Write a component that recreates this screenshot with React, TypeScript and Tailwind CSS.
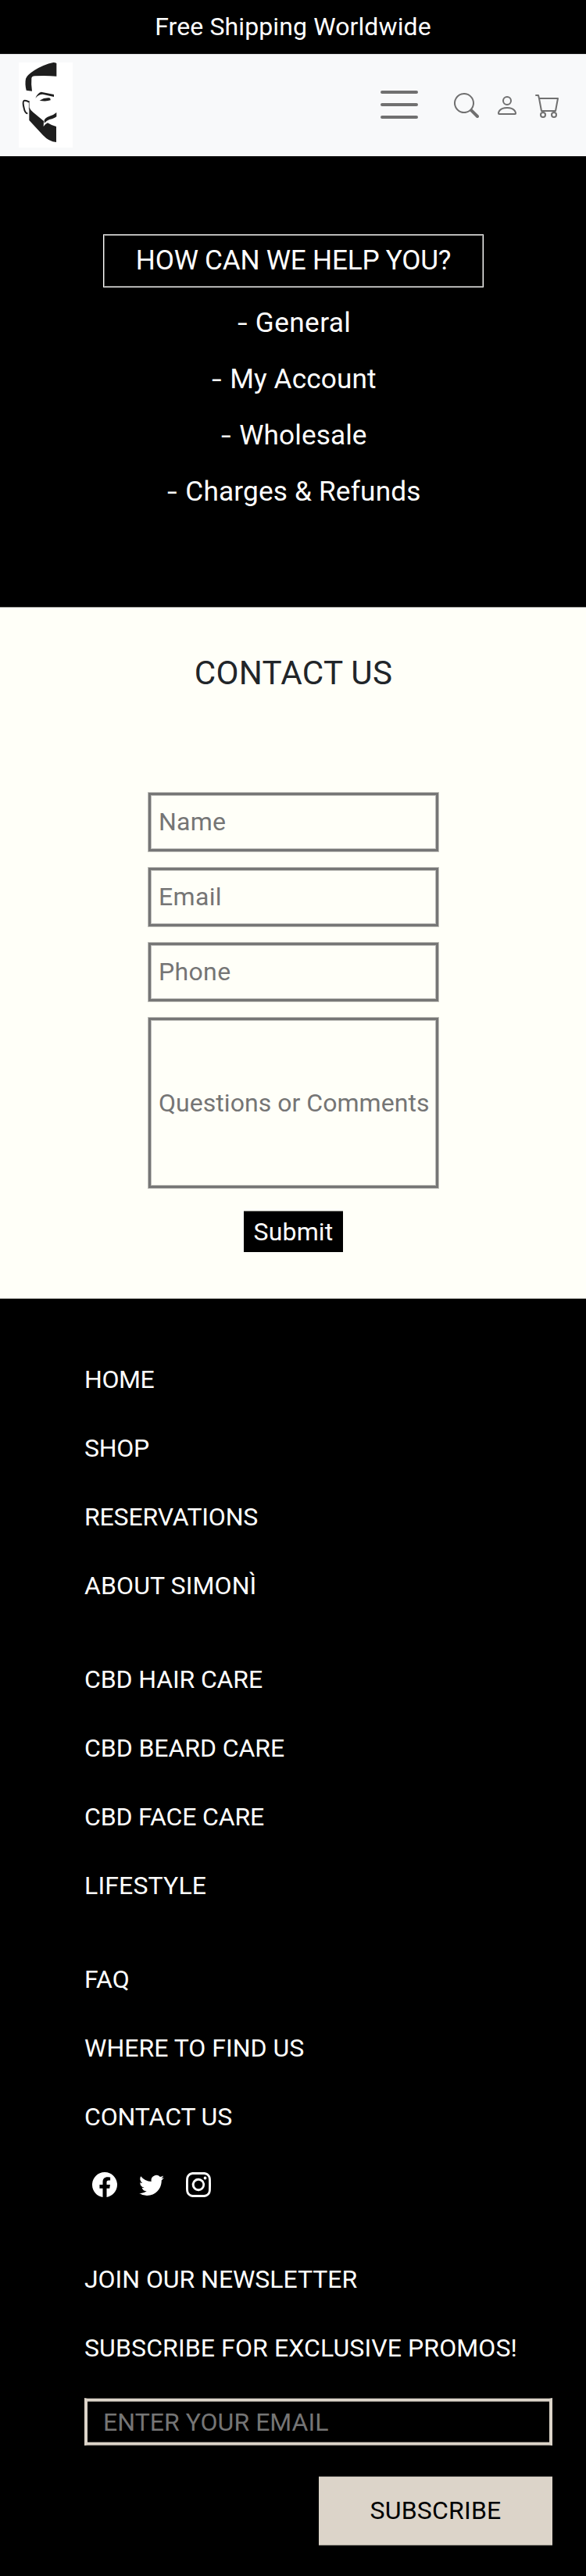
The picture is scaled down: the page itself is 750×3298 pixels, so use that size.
import { BsSearch, BsPerson, BsCart, BsFacebook, BsTwitter, BsInstagram } from "react-icons/bs";

type Label = { text: string; tracking: string };

const helpTopics: Label[] = [
  { text: "General", tracking: "tracking-[0.4px]" },
  { text: "My Account", tracking: "tracking-[0.13px]" },
  { text: "Wholesale", tracking: "tracking-[0.1px]" },
  { text: "Charges & Refunds", tracking: "tracking-[0.17px]" },
];

const linkGroups: Label[][] = [
  [
    { text: "HOME", tracking: "tracking-[-0.4px]" },
    { text: "SHOP", tracking: "tracking-[-0.3px]" },
    { text: "RESERVATIONS", tracking: "tracking-[-0.17px]" },
    { text: "ABOUT SIMONÌ", tracking: "tracking-[0.1px]" },
  ],
  [
    { text: "CBD HAIR CARE", tracking: "tracking-[-0.13px]" },
    { text: "CBD BEARD CARE", tracking: "tracking-[-0.06px]" },
    { text: "CBD FACE CARE", tracking: "tracking-[-0.15px]" },
    { text: "LIFESTYLE", tracking: "tracking-[0.15px]" },
  ],
  [
    { text: "FAQ", tracking: "tracking-normal" },
    { text: "WHERE TO FIND US", tracking: "tracking-normal" },
    { text: "CONTACT US", tracking: "tracking-[-0.13px]" },
  ],
];

function Logo() {
  return (
    <svg viewBox="0 0 207 327" className="mt-px h-[109px] w-[69px] bg-white" fill="#1e1e1e">
      <path d="M145 3Q140 0 133 0Q95 8 60 30Q32 48 27 62Q23 82 29 107L51 110Q47 85 49 60Q50 53 62 52Q100 49 145 53Z" />
      <path d="M64 137Q72 117 86 113L135 123V132Q110 126 92 122Q76 122 64 137Z" />
      <path d="M80 146Q98 134 118 136Q123 139 122 145Q104 151 80 146Z" />
      <path d="M40 152Q28 145 20 147Q14 151 20 175Q24 195 34 196" fill="none" stroke="#1e1e1e" strokeWidth="6" />
      <path d="M40 148V180" fill="none" stroke="#1e1e1e" strokeWidth="2" />
      <path d="M40 172Q45 184 56 192L96 225L95 246Q102 236 111 232Q126 242 144 246V306Q116 304 92 278L40 222Z" />
      <path d="M145 192Q134 202 118 206Q98 214 98 223V233Q108 222 118 219Q138 215 145 208Z" />
    </svg>
  );
}

function Header() {
  return (
    <header>
      <div className="h-[69px] bg-black pt-[10px] text-center tracking-[0.11px] text-white">
        Free Shipping Worldwide
      </div>
      <div className="flex h-[131px] items-center justify-between border-t border-[#dfe0e1] bg-[#f8f9fa] pr-[33px] pb-0.5 pl-6">
        <Logo />
        <div className="flex items-center text-[#707070]">
          <svg viewBox="0 0 30 30" className="mr-10 h-[60px] w-[60px]" stroke="currentColor" strokeWidth="2" strokeLinecap="round">
            <path d="M4 7h22M4 15h22M4 23h22" />
          </svg>
          <div className="flex items-center gap-5 pt-0.5">
            <BsSearch size={32} />
            <BsPerson size={32} />
            <BsCart size={32} />
          </div>
        </div>
      </div>
    </header>
  );
}

function Help() {
  return (
    <section className="flex h-[577px] flex-col items-center bg-black pt-[100px] pl-px text-[35.2px] text-white">
      <h2 className="h-[68px] w-[487px] border border-white text-center leading-[64px] tracking-[-0.24px] shadow-[inset_0_0_0_1px_#6b6b68]">
        HOW CAN WE HELP YOU?
      </h2>
      <ul className="pt-[9px] pl-0.5 text-center leading-[72px]">
        {helpTopics.map(({ text, tracking }) => (
          <li key={text} className={tracking}>
            <span className="inline-block w-[14px] origin-left scale-x-[1.3] text-left tracking-normal">-</span> {text}
          </li>
        ))}
      </ul>
    </section>
  );
}

const fieldClass =
  "w-[373px] border border-[#bfbfba] pr-3 pb-px pl-[13px] placeholder-[#757575] placeholder:opacity-100 shadow-[inset_0_0_0_3px_#767676,inset_0_0_0_4px_#bfbfba] outline-none";

function Contact() {
  return (
    <section className="flex h-[886px] flex-col items-center border-t border-b border-t-[#9f9f9a] border-b-[#a0a09a] bg-[#fffff8] pl-px text-[#212529]">
      <h2 className="mt-[52px] text-[42.2px] leading-[64px] tracking-[0.25px]">CONTACT US</h2>
      <form className="mt-[120px] flex flex-col items-center gap-[19px]">
        <input className={fieldClass + " h-[77px] tracking-[0.2px]"} placeholder="Name" />
        <input className={fieldClass + " h-[77px] tracking-[0.35px]"} placeholder="Email" />
        <input className={fieldClass + " h-[77px] tracking-[0.35px]"} placeholder="Phone" />
        <input className={fieldClass + " h-[220px] tracking-[0.04px]"} placeholder="Questions or Comments" />
        <button type="button" className="mt-[9px] h-[53px] w-[127px] border-t border-[#8f8f8a] bg-black tracking-[0.15px] text-white">
          Submit
        </button>
      </form>
    </section>
  );
}

function Footer() {
  return (
    <footer className="bg-black pr-[43px] pb-[39px] pl-[108px] text-white">
      <nav className="flex flex-col gap-[72px] pt-[79px]">
        {linkGroups.map((group) => (
          <ul key={group[0].text} className="flex flex-col gap-10">
            {group.map(({ text, tracking }) => (
              <li key={text} className={tracking}>
                {text}
              </li>
            ))}
          </ul>
        ))}
      </nav>
      <div className="mt-[47px] ml-[10px] flex gap-7">
        <BsFacebook size={32} />
        <BsTwitter size={32} />
        <BsInstagram size={32} />
      </div>
      <div className="mt-[81px] flex flex-col gap-10">
        <p className="tracking-[-0.05px]">JOIN OUR NEWSLETTER</p>
        <p className="tracking-[0.11px]">SUBSCRIBE FOR EXCLUSIVE PROMOS!</p>
        <input
          className="h-[61px] w-full border-x-4 border-t border-b border-x-[#dcd4c9] border-t-[#4a4743] border-b-[#8f8a83] bg-black px-5 tracking-[0.04px] placeholder-[#757575] placeholder:opacity-100 shadow-[inset_0_3px_#dcd4c9,inset_0_-3px_#dcd4c9,inset_0_4px_#8f8a83,inset_0_-4px_#4a4743] outline-none"
          placeholder="ENTER YOUR EMAIL"
        />
      </div>
      <div className="mt-[39px] flex justify-end">
        <button
          type="button"
          className="h-[89px] w-[299px] border-t border-b border-t-[#4a4743] border-b-[#8f8a83] bg-[#dcd4c9] pb-px tracking-[0.2px] text-black"
        >
          SUBSCRIBE
        </button>
      </div>
    </footer>
  );
}

export default function App() {
  return (
    <div className="w-[750px] bg-black font-['Roboto',sans-serif] text-[32px] leading-[48px]">
      <Header />
      <Help />
      <Contact />
      <Footer />
    </div>
  );
}
